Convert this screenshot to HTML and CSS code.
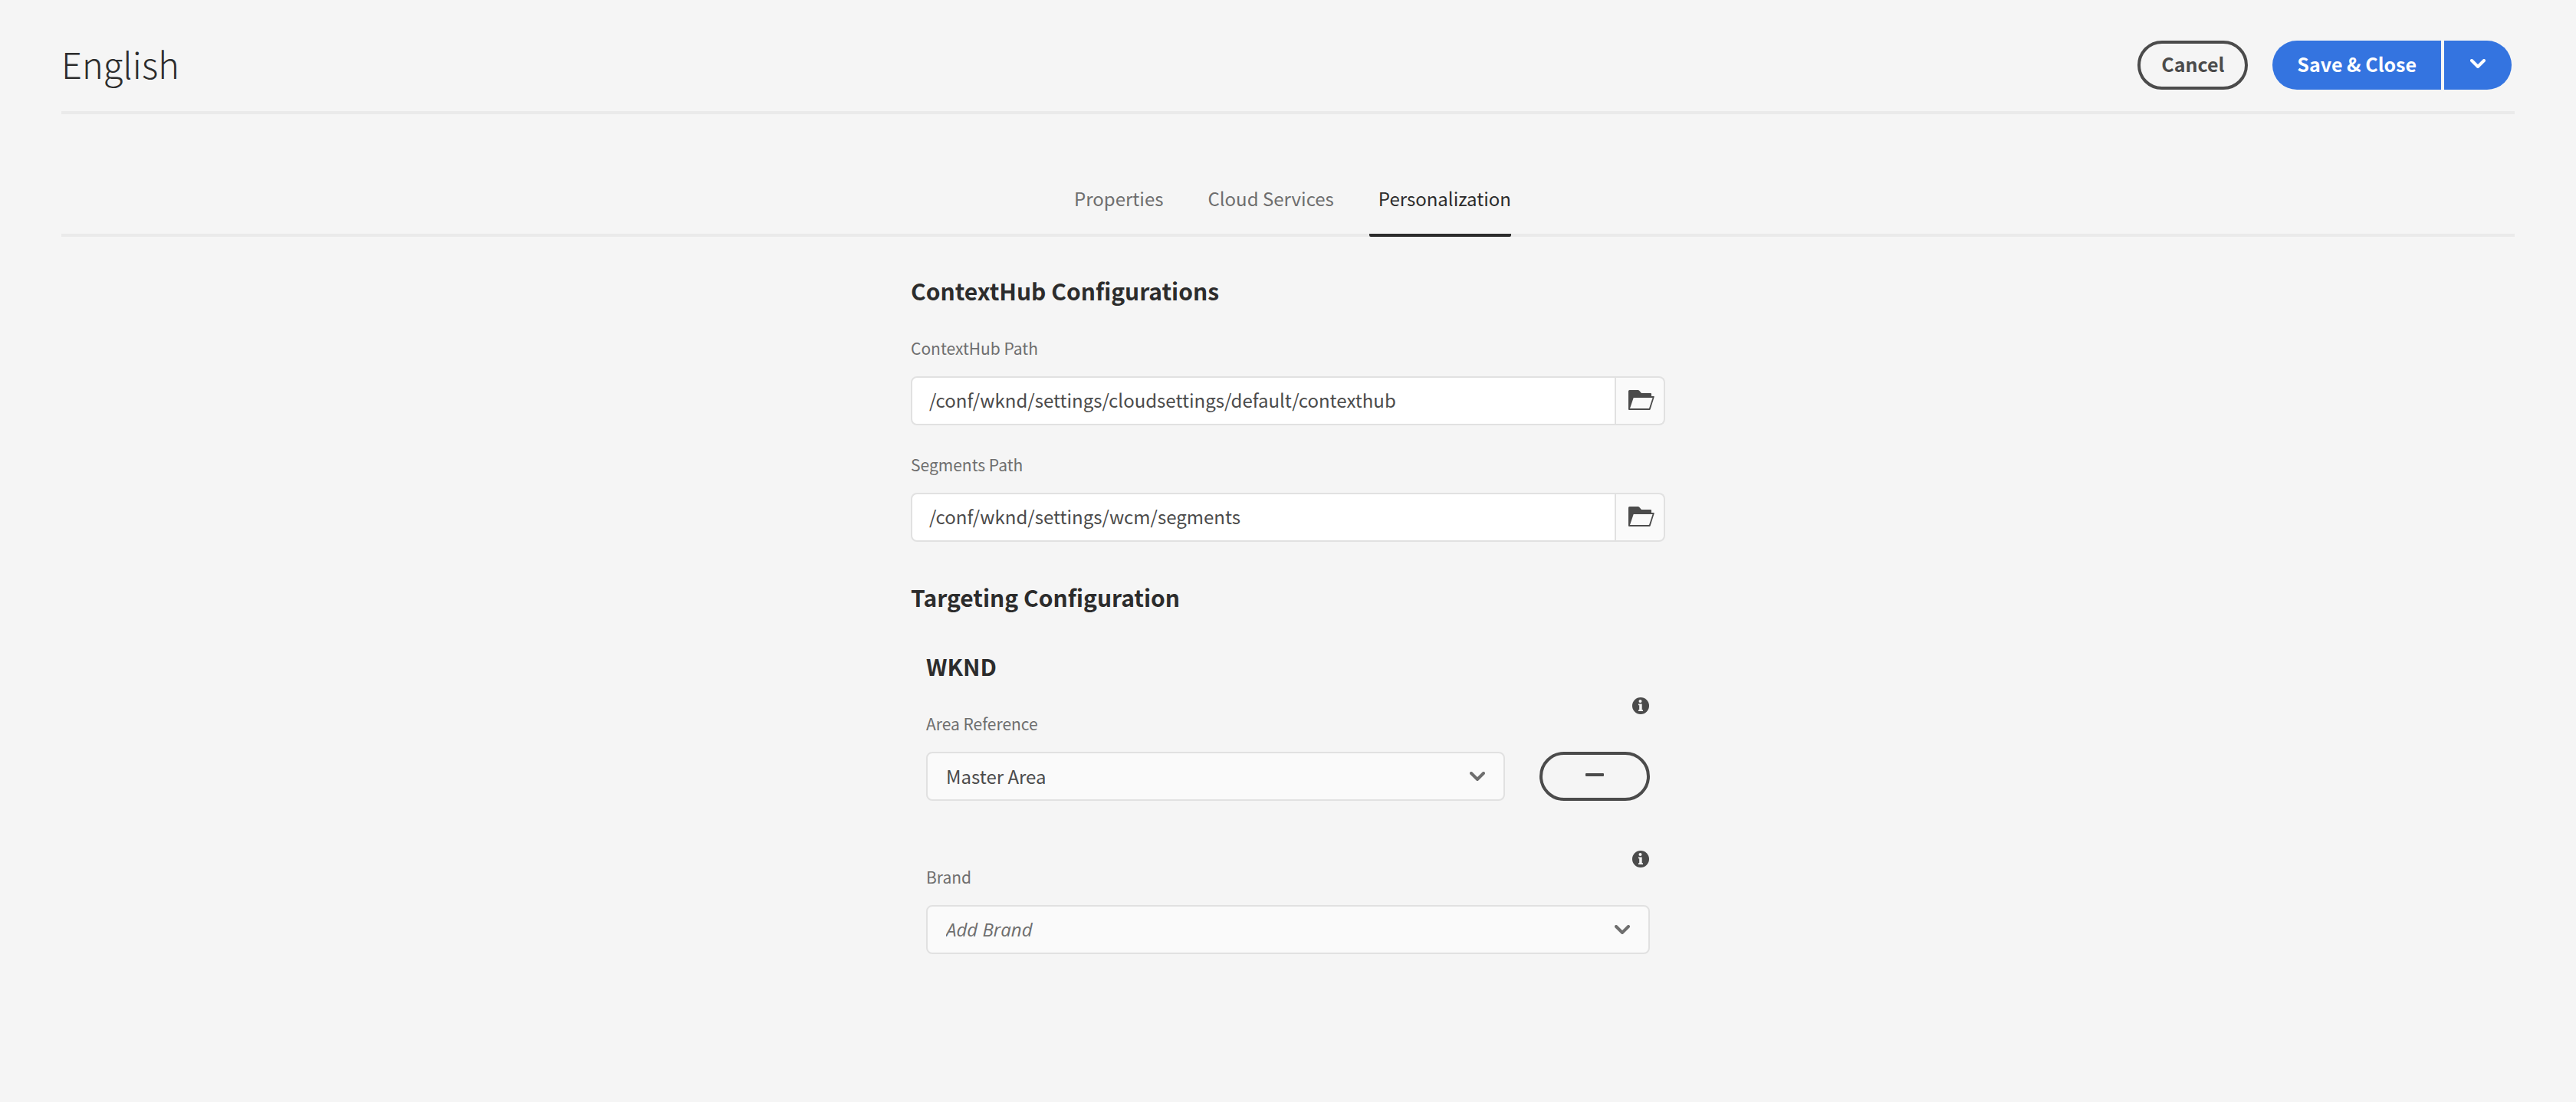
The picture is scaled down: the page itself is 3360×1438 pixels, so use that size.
FILE: index.html
```html
<!DOCTYPE html>
<html lang="en">
<head>
<meta charset="utf-8">
<title>English</title>
<link rel="stylesheet" href="styles.css">
</head>
<body>
<svg class="sprite" aria-hidden="true">
  <symbol id="chevron" viewBox="0 0 20 12"><path d="M2 2l8 8 8-8" fill="none" stroke="currentColor" stroke-width="4" stroke-linecap="round" stroke-linejoin="miter"/></symbol>
  <symbol id="folder" viewBox="0 0 34 26"><path fill="currentColor" fill-rule="evenodd" d="M0 25V1.500Q0 0 1.500 0H12.500Q13.500 0 14.200.7L17 4H29Q30 4 30 5V8H33.200Q34 8 33.700 9L28.600 25.200Q28.300 26 27.500 26H1Q0 26 0 25ZM6.700 10L2 24H27L31.600 10Z"/></symbol>
  <symbol id="info" viewBox="0 0 22 22"><circle cx="11" cy="11" r="11" fill="currentColor"/><circle cx="10.500" cy="5" r="2" fill="#f5f5f5"/><path d="M8 8.500h4.700v7.700H14V18H8v-1.800h1.200v-5.900H8z" fill="#f5f5f5"/></symbol>
</svg>
<header class="header">
  <h1 class="title">English</h1>
  <div class="actions">
    <button class="button outline" type="button">Cancel</button>
    <div class="split">
      <button class="button primary save" type="submit" form="properties">Save &amp; Close</button>
      <button class="button primary more" type="button" aria-label="More save options"><svg class="chevron"><use href="#chevron"/></svg></button>
    </div>
  </div>
</header>
<nav class="tabs" aria-label="Sections">
  <a class="tab" href="#properties">Properties</a>
  <a class="tab" href="#cloud-services">Cloud Services</a>
  <a class="tab selected" href="#personalization" aria-current="page">Personalization</a>
</nav>
<main>
  <form class="form" id="properties">
    <section>
      <h2 class="heading">ContextHub Configurations</h2>
      <div class="fields">
        <div class="field">
          <label class="label" for="contexthub-path">ContextHub Path</label>
          <div class="path">
            <input class="input" id="contexthub-path" type="text" value="/conf/wknd/settings/cloudsettings/default/contexthub">
            <button class="browse" type="button" aria-label="Browse"><svg class="folder"><use href="#folder"/></svg></button>
          </div>
        </div>
        <div class="field">
          <label class="label" for="segments-path">Segments Path</label>
          <div class="path">
            <input class="input" id="segments-path" type="text" value="/conf/wknd/settings/wcm/segments">
            <button class="browse" type="button" aria-label="Browse"><svg class="folder"><use href="#folder"/></svg></button>
          </div>
        </div>
      </div>
    </section>
    <section>
      <h2 class="heading">Targeting Configuration</h2>
      <div class="group">
        <h3 class="heading">WKND</h3>
        <div class="targets">
          <div class="field">
            <svg class="info"><use href="#info"/></svg>
            <label class="label" for="area">Area Reference</label>
            <div class="row">
              <div class="dropdown">
                <select class="select" id="area"><option>Master Area</option></select>
                <svg class="chevron"><use href="#chevron"/></svg>
              </div>
              <button class="button outline" type="button" aria-label="Remove area"><span class="minus"></span></button>
            </div>
          </div>
          <div class="field">
            <svg class="info"><use href="#info"/></svg>
            <label class="label" for="brand">Brand</label>
            <div class="dropdown">
              <select class="select placeholder" id="brand"><option>Add Brand</option></select>
              <svg class="chevron"><use href="#chevron"/></svg>
            </div>
          </div>
        </div>
      </div>
    </section>
  </form>
</main>
</body>
</html>
```
FILE: styles.css
```css
* {
  box-sizing: border-box;
}

body {
  margin: 0;
  padding: 53px 80px 80px;
  background: #f5f5f5;
  color: #4b4b4b;
  font: 24px/32px "Noto Sans CJK SC", "Open Sans", sans-serif;
}

button,
input,
select {
  margin: 0;
  font: inherit;
  color: inherit;
}

h1,
h2,
h3 {
  margin: 0;
  color: #2c2c2c;
}

.sprite {
  display: none;
}

.header {
  display: flex;
  align-items: flex-start;
  justify-content: space-between;
  padding: 0 4px 28px 0;
  border-bottom: 4px solid #eaeaea;
}

.title {
  font-size: 47px;
  line-height: 60px;
  font-weight: 300;
}

.actions {
  display: flex;
  gap: 32px;
}

.split {
  display: flex;
  gap: 4px;
}

.button {
  display: flex;
  align-items: center;
  justify-content: center;
  height: 64px;
  padding: 0 0 4px;
  border: 0;
  border-radius: 32px;
  font-size: 25px;
  font-weight: 700;
}

.outline {
  width: 144px;
  border: 4px solid #4b4b4b;
  background: transparent;
}

.primary {
  background: #3474e0;
  color: #fff;
}

.save {
  padding: 0 32px 4px;
  border-radius: 32px 0 0 32px;
}

.more {
  width: 88px;
  border-radius: 0 32px 32px 0;
}

.chevron {
  width: 20px;
  height: 12px;
}

.tabs {
  display: flex;
  justify-content: center;
  gap: 46px;
  padding-top: 80px;
  border-bottom: 4px solid #eaeaea;
}

.tab {
  margin-bottom: -4px;
  padding: 14px 0 30px 12px;
  border-bottom: 4px solid transparent;
  color: #6e6e6e;
  text-decoration: none;
}

.selected {
  border-radius: 2px;
  background: linear-gradient(#2c2c2c, #2c2c2c) bottom / 100% 4px no-repeat border-box;
  color: #2c2c2c;
}

.form {
  display: grid;
  gap: 52px;
  max-width: 984px;
  margin: 50px auto 0;
}

.heading {
  font-size: 30px;
  line-height: 40px;
  font-weight: 700;
}

.fields {
  display: grid;
  gap: 36px;
  margin-top: 40px;
}

.field {
  display: grid;
  gap: 22px;
  position: relative;
}

.label {
  color: #6e6e6e;
  font-size: 21px;
  line-height: 30px;
}

.path {
  display: flex;
}

.input {
  flex: 1;
  min-width: 0;
  height: 64px;
  padding: 0 24px 4px 22px;
  border: 2px solid #e1e1e1;
  border-radius: 8px 0 0 8px;
  background: #fff;
}

.browse {
  display: flex;
  align-items: center;
  justify-content: center;
  width: 64px;
  padding: 0 0 2px 4px;
  border: 2px solid #e1e1e1;
  border-left: 0;
  border-radius: 0 8px 8px 0;
  background: #fafafa;
}

.folder {
  width: 34px;
  height: 26px;
}

.group {
  padding: 50px 20px 0;
}

.targets {
  display: grid;
  gap: 84px;
  margin-top: 40px;
}

.info {
  position: absolute;
  top: -19px;
  right: 1px;
  width: 22px;
  height: 22px;
}

.row {
  display: flex;
  gap: 45px;
}

.dropdown {
  display: grid;
  flex: 1;
  align-items: center;
}

.dropdown > * {
  grid-area: 1 / 1;
}

.dropdown .chevron {
  justify-self: end;
  margin-right: 26px;
  color: #6e6e6e;
  pointer-events: none;
}

.select {
  appearance: none;
  width: 100%;
  height: 64px;
  padding: 0 60px 0 24px;
  border: 2px solid #e1e1e1;
  border-radius: 8px;
  background: #fafafa;
}

.placeholder {
  color: #6e6e6e;
  font-family: "Open Sans", sans-serif;
  font-style: italic;
}

.minus {
  width: 24px;
  height: 4px;
  border-radius: 1px;
  background: #4b4b4b;
}
```
